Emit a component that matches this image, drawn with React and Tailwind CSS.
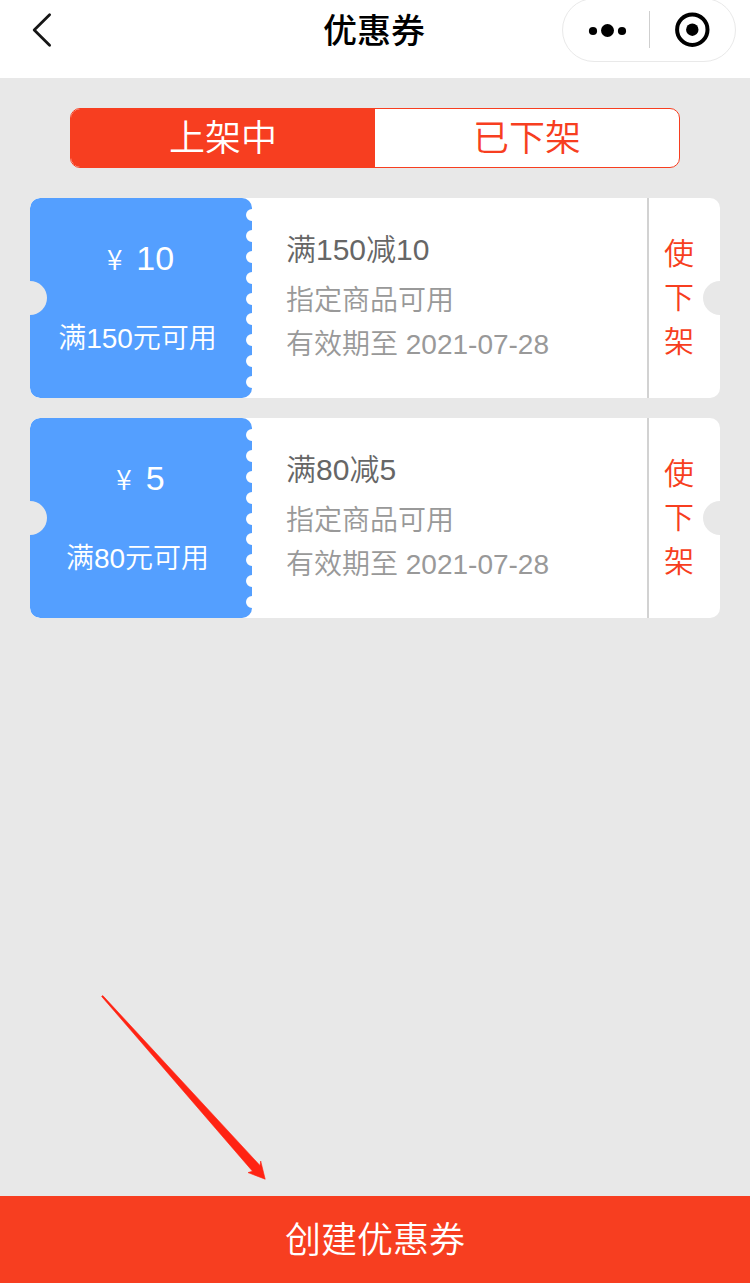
const coupons = [
  { amount: 10, limit: 150, date: '2021-07-28' },
  { amount: 5, limit: 80, date: '2021-07-28' },
]

const Header = () => {
  return (
    <header className="relative h-[78px] bg-white">
      <div className="flex h-[62px] items-center justify-center pr-[2px]">
        <h1 className="text-[34px] leading-[62px] font-medium text-black">优惠券</h1>
      </div>
      <svg
        className="absolute top-[12px] left-[30px]"
        width="24"
        height="36"
        fill="none"
        stroke="#161616"
        strokeWidth="2.8"
        strokeLinecap="round"
        strokeLinejoin="round"
      >
        <path d="M19.6 2.8L4.2 18l15.4 15.2" />
      </svg>
      {/* menu capsule, its top edge runs off the screen */}
      <svg className="absolute top-0 right-0" width="190" height="64" fill="none">
        <rect x="2.5" y="-1.5" width="173" height="63" rx="31.5" stroke="#e9e9e9" />
        <g fill="#000">
          <circle cx="33" cy="31" r="4.1" />
          <circle cx="47.5" cy="30.5" r="6.5" />
          <circle cx="62" cy="31" r="4.1" />
          <circle cx="132.3" cy="29.7" r="6.2" />
        </g>
        <path d="M89.5 11v37" stroke="#cfcfcf" />
        <circle cx="132.3" cy="29.7" r="15.2" stroke="#000" strokeWidth="4" />
      </svg>
    </header>
  )
}

const Coupon = ({ amount, limit, date }) => {
  return (
    <li className="relative flex h-[200px] overflow-hidden rounded-[10px] bg-white">
      <div className="relative w-[222px] shrink-0 rounded-[10px] bg-[#549fff] text-white">
        <p className="mt-[40px] flex h-[43px] items-baseline justify-center gap-[14px] pr-px leading-[40px]">
          <span className="font-['Noto_Sans_CJK_SC',sans-serif] text-[28px]">¥</span>
          <span className="text-[34px]">{amount}</span>
        </p>
        <p className="mt-[38px] pr-[7px] text-center text-[28px] leading-[40px]">
          满{limit}元可用
        </p>
        <div className="absolute top-[11px] -right-[6px] bottom-[10px] flex flex-col justify-between">
          {Array.from({ length: 9 }, (_, i) => (
            <i className="block size-[12px] rounded-full bg-white" key={i} />
          ))}
        </div>
      </div>
      <div className="flex-1 pt-[30px] pl-[34px]">
        <h2 className="text-[30px] leading-[44px] text-[#666]">
          满{limit}减{amount}
        </h2>
        <p className="mt-[7px] text-[28px] leading-[44px] text-[#999]">指定商品可用</p>
        <p className="text-[28px] leading-[44px] text-[#999]">有效期至 {date}</p>
      </div>
      <button className="w-[73px] border-l-2 border-[#d2d2d2] pr-[11px] text-[30px] leading-[44px] text-[#f73e20]">
        <span className="mx-auto block w-[30px]">使下架</span>
      </button>
      {/* side notches */}
      <i className="absolute top-[83px] -left-[17px] size-[34px] rounded-full bg-[#e8e8e8]" />
      <i className="absolute top-[83px] -right-[17px] size-[34px] rounded-full bg-[#e8e8e8]" />
    </li>
  )
}

export default function App() {
  return (
    <div className="relative flex h-[1283px] w-[750px] flex-col overflow-hidden bg-[#e8e8e8] font-['Liberation_Sans','Noto_Sans_CJK_SC',sans-serif] font-[350]">
      <Header />
      <main className="flex-1 px-[30px] pt-[30px]">
        <div className="mx-[40px] flex h-[60px] overflow-hidden rounded-[10px] border border-[#f73e20] bg-white text-[36px] leading-[60px]">
          <button className="flex-1 bg-[#f73e20] text-white">上架中</button>
          <button className="flex-1 text-[#f73e20]">已下架</button>
        </div>
        <ul className="mt-[30px] flex flex-col gap-[20px]">
          {coupons.map((item) => (
            <Coupon key={item.amount} {...item} />
          ))}
        </ul>
      </main>
      <button className="h-[87px] bg-[#f73e20] pt-[2px] text-[36px] leading-[85px] text-white">
        创建优惠券
      </button>
      <svg className="absolute top-[990px] left-[96px]" width="180" height="196">
        <path
          d="M5.6 6.4L6.8 5.6L164 175.5L164.7 171L169.2 189.2L152 182.6L156.5 181.2Z"
          fill="#ff2313"
          stroke="#ff2313"
          strokeWidth="0.6"
        />
      </svg>
    </div>
  )
}
